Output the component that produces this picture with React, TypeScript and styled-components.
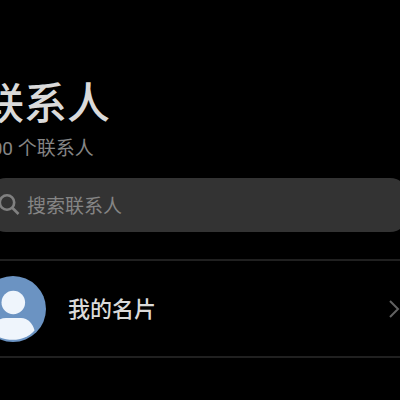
import React from "react";
import styled, { createGlobalStyle } from "styled-components";

const GlobalStyle = createGlobalStyle`
  * { box-sizing: border-box; }
  html, body { margin: 0; background: #000; overflow: hidden; }
  body { font-family: Roboto, "Noto Sans CJK SC", sans-serif; }
`;

const Page = styled.main`
  min-height: 100vh;
  margin: 0 -12px 0 -20px;
  padding-top: 74px;
  background: #000;
`;

const Title = styled.h1`
  margin: 0;
  padding-left: 1px;
  font-size: 43px;
  line-height: 60px;
  font-weight: 500;
  color: #dadada;
  white-space: nowrap;
`;

const Count = styled.p`
  margin: 0;
  padding: 1px 0 0 1px;
  font-size: 19px;
  line-height: 28px;
  color: #858585;
  white-space: nowrap;
`;

const SearchBox = styled.label`
  display: flex;
  align-items: center;
  gap: 7px;
  height: 54px;
  margin: 15px 4px 27px 8px;
  padding: 0 10px;
  border-radius: 18px;
  background: #333;
`;

const SearchGlyph = styled.svg`
  flex: none;
  width: 22px;
  height: 22px;
  fill: none;
  stroke: #808080;
  stroke-width: 2.6;
`;

const SearchInput = styled.input`
  flex: 1;
  min-width: 0;
  padding: 4px 0 0;
  border: 0;
  outline: 0;
  background: transparent;
  font: inherit;
  font-size: 19px;
  line-height: 28px;
  color: #dadada;
  &::placeholder { color: #858585; opacity: 1; }
`;

const CardRow = styled.button`
  display: flex;
  align-items: center;
  width: 100%;
  height: 99px;
  padding: 0 12px 0 0;
  border: solid #202020;
  border-width: 2px 0;
  background: transparent;
  font: inherit;
  text-align: left;
`;

const Avatar = styled.svg`
  flex: none;
  width: 66px;
  height: 66px;
`;

const Name = styled.span`
  flex: 1;
  margin-left: 22px;
  padding-top: 2px;
  font-size: 22px;
  line-height: 32px;
  font-weight: 500;
  color: #dadada;
`;

const Chevron = styled.svg`
  flex: none;
  width: 12px;
  height: 20px;
  fill: none;
  stroke: #626262;
  stroke-width: 2;
`;

export default function App() {
  return (
    <>
      <GlobalStyle />
      <Page>
        <Title>联系人</Title>
        <Count>100 个联系人</Count>
        <SearchBox>
          <SearchGlyph viewBox="0 0 22 22" aria-hidden="true">
            <circle cx="9" cy="8.5" r="7.2" />
            <path d="M14 13.5l6.500 6.500" />
          </SearchGlyph>
          <SearchInput type="search" placeholder="搜索联系人" aria-label="搜索联系人" />
        </SearchBox>
        <CardRow type="button">
          <Avatar viewBox="0 0 66 66" aria-hidden="true">
            <defs>
              <clipPath id="avatar-disc">
                <circle cx="33" cy="33" r="33" />
              </clipPath>
            </defs>
            <g clipPath="url(#avatar-disc)">
              <rect width="66" height="66" fill="#6b93c2" />
              <circle cx="33.3" cy="26.5" r="11.8" fill="#eff5fc" />
              <path
                d="M11 55C13 47 18 42 26 42H41C48 42 53 48 54.500 54.500C49 61 41 63.800 33 63.800C24 63.800 16 61 11 55Z"
                fill="#eff5fc"
              />
            </g>
          </Avatar>
          <Name>我的名片</Name>
          <Chevron viewBox="0 0 12 20" aria-hidden="true">
            <path d="M2 2l8 8-8 8" />
          </Chevron>
        </CardRow>
      </Page>
    </>
  );
}
